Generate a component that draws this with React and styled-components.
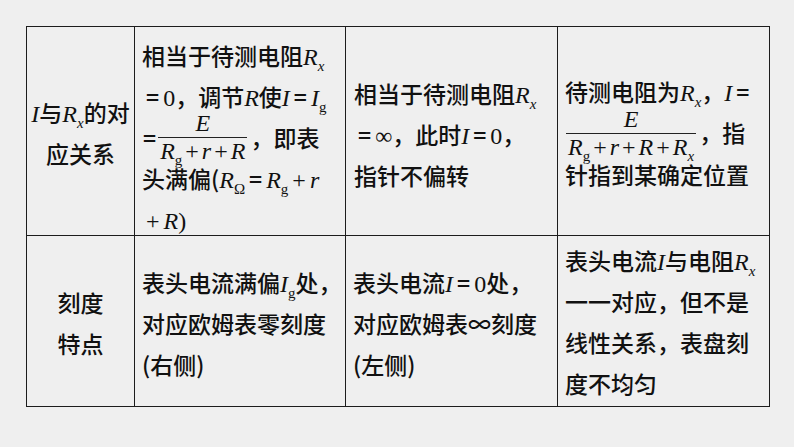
import React from "react";
import styled, { createGlobalStyle } from "styled-components";

const GlobalStyle = createGlobalStyle`
  html, body {
    margin: 0;
    padding: 0;
    background: #efefef;
  }
`;

const Page = styled.div`
  width: 794px;
  height: 447px;
  box-sizing: border-box;
  padding: 26px 0 0 26px;
  background: #efefef;
  color: #111;
  font-family: "Noto Sans CJK SC", "Noto Sans", sans-serif;
  font-weight: 500;
`;

const Table = styled.table`
  border-collapse: collapse;
  table-layout: fixed;
  width: 744px;
  height: 380px;
  font-size: 23px;
  line-height: 41px;
`;

const Row = styled.tr`
  height: ${({ h }) => h}px;
`;

const Cell = styled.td`
  border: 1px solid #1c1c1c;
  padding: ${({ pad }) => pad || "0 6px 0 7px"};
  vertical-align: ${({ top }) => (top ? "top" : "middle")};
  text-align: ${({ center }) => (center ? "center" : "left")};
  white-space: nowrap;
  overflow: hidden;
`;

/* lets a full cell run a little past the row without stretching it */
const Overhang = styled.div`
  margin-bottom: -${({ by }) => by}px;
`;

const V = styled.span`
  font-family: "Liberation Serif", "Times New Roman", serif;
  font-style: italic;
  font-weight: 400;
  font-size: 24px;
  line-height: 1;
`;

const N = styled.span`
  font-family: "Liberation Serif", "Times New Roman", serif;
  font-weight: 400;
  font-size: 24px;
  line-height: 1;
  padding: 0 ${({ sp }) => (sp ? "4px" : "0")};
`;

const Sub = styled.sub`
  font-family: "Liberation Serif", "Times New Roman", serif;
  font-style: ${({ it }) => (it ? "italic" : "normal")};
  font-weight: 400;
  font-size: 15px;
  vertical-align: -6px;
  line-height: 0;
`;

const Eq = styled.span`
  padding: 0 ${({ sp }) => (sp ? "4px" : "1px")};
`;

const Frac = styled.span`
  display: inline-flex;
  flex-direction: column;
  align-items: stretch;
  vertical-align: middle;
  margin: -9px 3px -9px 1px;
  position: relative;
  top: -3px;
  font-family: "Liberation Serif", "Times New Roman", serif;
  font-weight: 400;
  font-size: 24px;
  line-height: 25px;
`;

const Top = styled.span`
  text-align: center;
  font-style: italic;
  border-bottom: 1px solid #222;
  padding-bottom: 1px;
`;

const Bottom = styled.span`
  text-align: center;
  padding: 1px 2px 0;
`;

const Plus = styled.span`
  font-style: normal;
  padding: 0 3px;
`;

const R = ({ s, it }) => (
  <>
    <V>R</V>
    {s && <Sub it={it}>{s}</Sub>}
  </>
);

const Cols = () => (
  <colgroup>
    <col style={{ width: 108 }} />
    <col style={{ width: 211 }} />
    <col style={{ width: 212 }} />
    <col style={{ width: 212 }} />
  </colgroup>
);

export default function App() {
  return (
    <Page>
      <GlobalStyle />
      <Table>
        <Cols />
        <tbody>
          <Row h={209}>
            <Cell center pad="4px 2px 0 2px">
              <V>I</V>与<R s="x" it />的对
              <br />
              应关系
            </Cell>
            <Cell top pad="8px 6px 0 7px">
              <Overhang by={10}>
                相当于待测电阻<R s="x" it />
                <br />
                <Eq sp>=</Eq>
                <N>0</N>，调节<V>R</V>使<V>I</V>
                <Eq sp>=</Eq>
                <V>I</V>
                <Sub>g</Sub>
                <br />
                <Eq>=</Eq>
                <Frac>
                  <Top>E</Top>
                  <Bottom>
                    <V>R</V>
                    <Sub>g</Sub>
                    <Plus>+</Plus>
                    <V>r</V>
                    <Plus>+</Plus>
                    <V>R</V>
                  </Bottom>
                </Frac>
                ，即表
                <br />
                头满偏(<R s="Ω" />
                <Eq sp>=</Eq>
                <R s="g" />
                <N sp>+</N>
                <V>r</V>
                <br />
                <N sp>+</N>
                <V>R</V>
                <N>)</N>
              </Overhang>
            </Cell>
            <Cell pad="6px 6px 0 8px">
              相当于待测电阻<R s="x" it />
              <br />
              <Eq sp>=</Eq>
              <N>∞</N>，此时<V>I</V>
              <Eq sp>=</Eq>
              <N>0</N>，
              <br />
              指针不偏转
            </Cell>
            <Cell pad="4px 6px 0 7px">
              待测电阻为<R s="x" it />，<V>I</V>
              <Eq sp>=</Eq>
              <br />
              <Frac>
                <Top>E</Top>
                <Bottom>
                  <V>R</V>
                  <Sub>g</Sub>
                  <Plus>+</Plus>
                  <V>r</V>
                  <Plus>+</Plus>
                  <V>R</V>
                  <Plus>+</Plus>
                  <V>R</V>
                  <Sub it>x</Sub>
                </Bottom>
              </Frac>
              ，指
              <br />
              针指到某确定位置
            </Cell>
          </Row>
          <Row h={171}>
            <Cell center pad="4px 2px 0 2px">
              刻度
              <br />
              特点
            </Cell>
            <Cell pad="4px 6px 0 7px">
              表头电流满偏<V>I</V>
              <Sub>g</Sub>处，
              <br />
              对应欧姆表零刻度
              <br />
              (右侧)
            </Cell>
            <Cell pad="4px 6px 0 7px">
              表头电流<V>I</V>
              <Eq sp>=</Eq>
              <N>0</N>处，
              <br />
              对应欧姆表∞刻度
              <br />
              (左侧)
            </Cell>
            <Cell top pad="4px 6px 0 7px">
              <Overhang by={4}>
                表头电流<V>I</V>与电阻<R s="x" it />
                <br />
                一一对应，但不是
                <br />
                线性关系，表盘刻
                <br />
                度不均匀
              </Overhang>
            </Cell>
          </Row>
        </tbody>
      </Table>
    </Page>
  );
}
